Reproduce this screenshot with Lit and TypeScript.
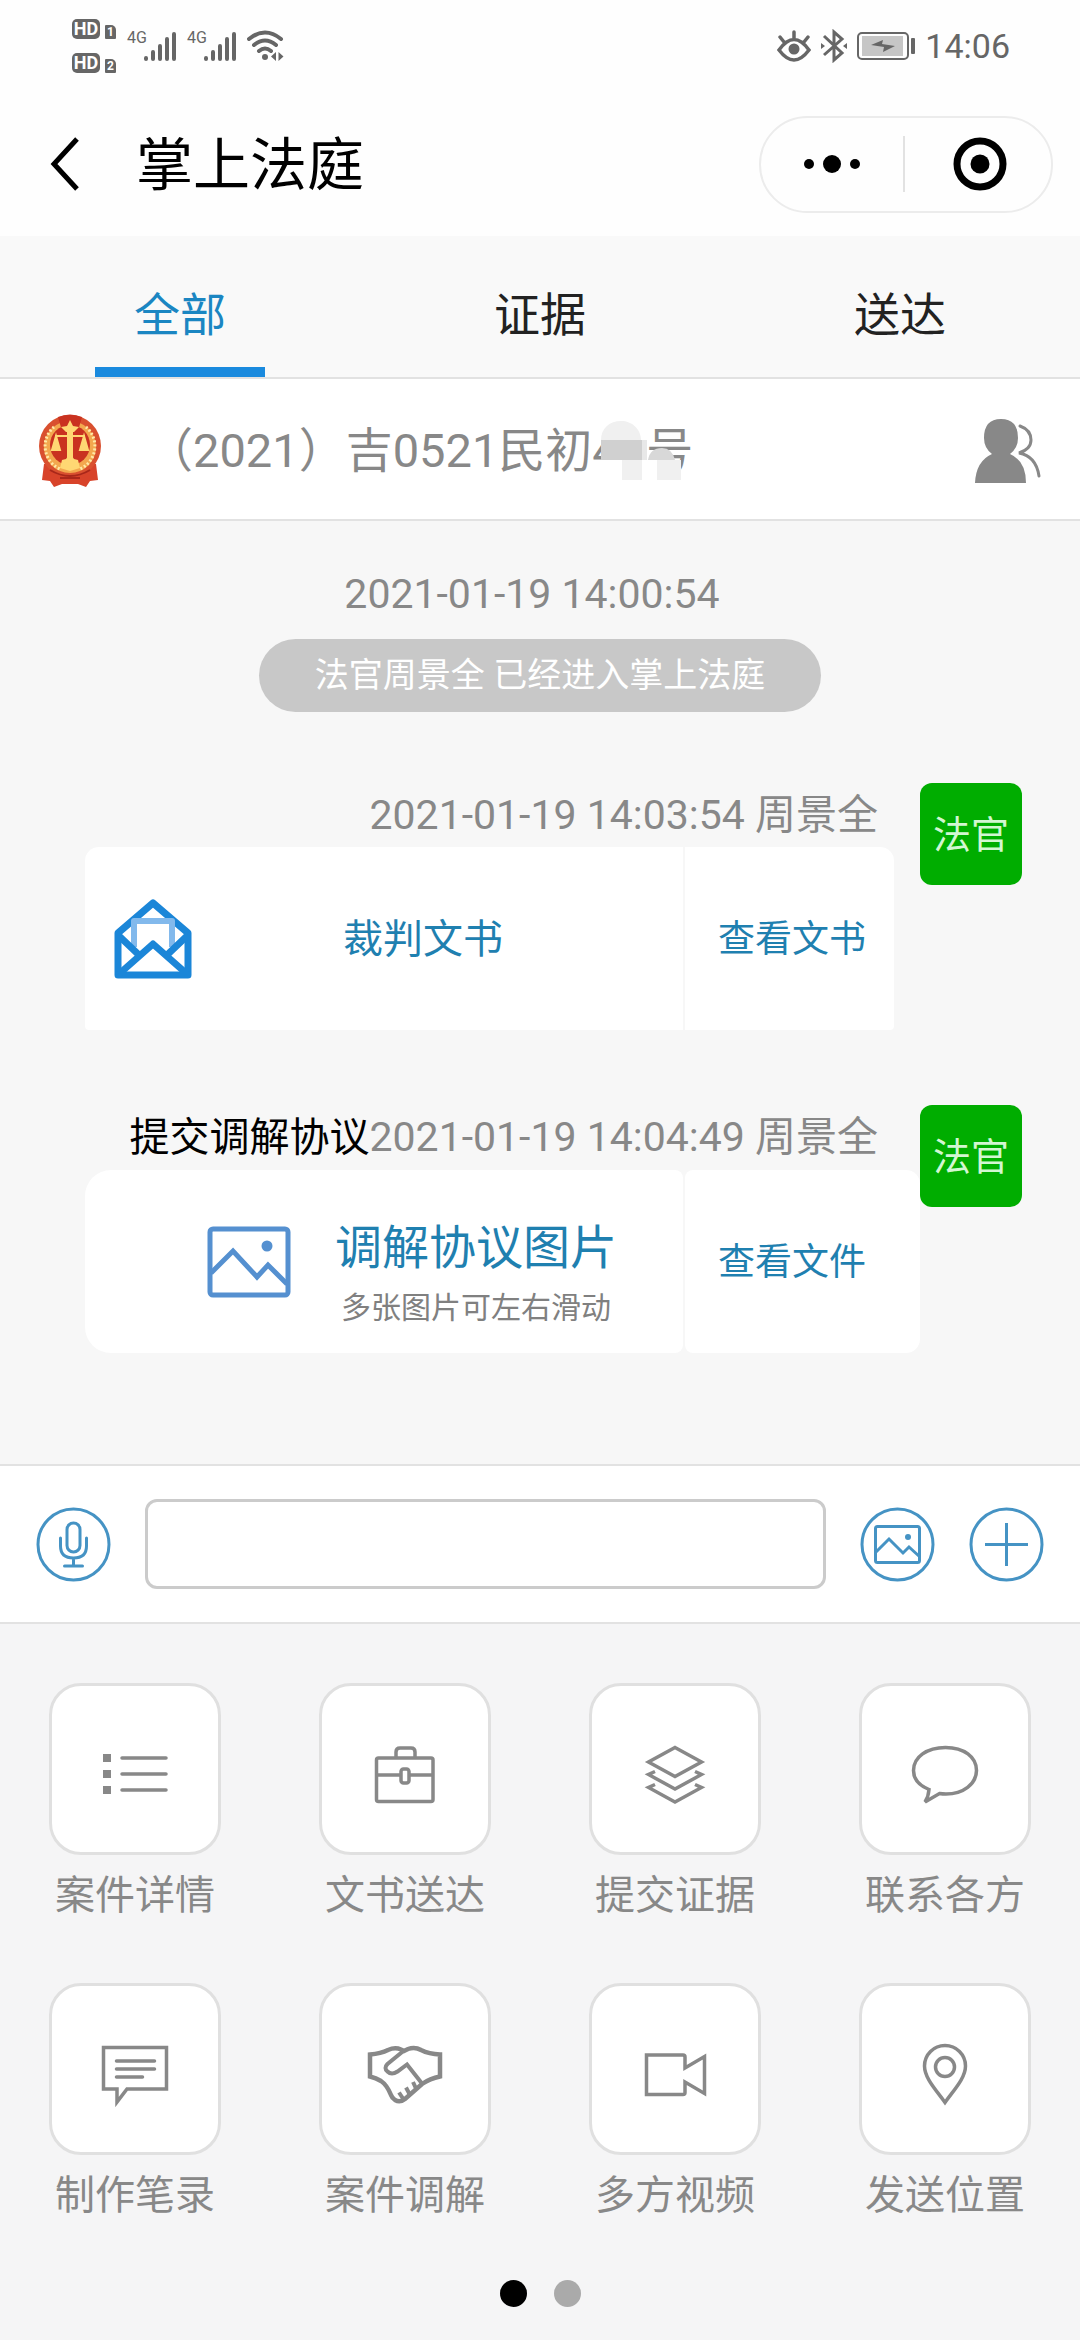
import { LitElement, html, css, svg } from "lit";
import { customElement, state } from "lit/decorators.js";
import { classMap } from "lit/directives/class-map.js";

interface Tool {
  label: string;
  icon: unknown;
}

const TABS = ["全部", "证据", "送达"];

const TOOLS: Tool[] = [
  {
    label: "案件详情",
    icon: svg`<path fill="currentColor" stroke="none" d="M8 25h8v8H8zM8 41h8v8H8zM8 57h8v8H8z"/><path stroke-linecap="round" d="M27 29h44M27 45h44M27 61h44"/>`,
  },
  {
    label: "文书送达",
    icon: svg`<rect x="11.500" y="29" width="56.500" height="43.500" rx="2"/><path d="M31 29V23q0-4 4-4h11q4 0 4 4v6M12 46h23M45 46h23"/><rect x="36" y="40" width="8" height="14" rx="2.500"/>`,
  },
  {
    label: "提交证据",
    icon: svg`<path d="M40 18.500 66.500 33 40 47.500 13.500 33zM20 42.500 13.500 45.500 40 60l26.500-14.500L60 42.500M20 55.500l-6.500 3L40 73l26.500-14.500-6.500-3"/>`,
  },
  {
    label: "联系各方",
    icon: svg`<path d="M24 60.500C13 56 8.500 49 8.500 41.500 8.500 28 22 18.500 40.500 18.500S71.500 28 71.500 41.500 58 65 41 65q-3.500 0-6.500-.5L20 73q3.500-5.500 4-12.500z"/>`,
  },
  {
    label: "制作笔录",
    icon: svg`<path d="M8.500 18.500h63V60H32L22 73V60H8.500z"/><path stroke-linecap="round" d="M21.500 32h38M21.500 40h38M21.500 48h26"/>`,
  },
  {
    label: "案件调解",
    icon: svg`<path stroke-width="4.500" d="M5 25.500q11-1 18-4.500 7-3 13-.5l3 1.500 4-2q7-2.500 13 1 8 4 19 4.500v22q-10 2-18 7.500L40 70q-5 4-10 1-3-2-4-5-4-10-10-14-5-3-11-4.500z"/><path stroke-width="4" d="M39 21.500 22.500 35q-4 4 0 7.500 4 4 10 0L42 35.500 57 54.500M48 53l3 6.500M41 58.500l3.500 6.500M34 63.500l4 6"/>`,
  },
  {
    label: "多方视频",
    icon: svg`<path d="M11.500 26H48q2 0 2 2v11l19.500-11.500v37L50 53v10.500q0 2-2 2H11.500z"/>`,
  },
  {
    label: "发送位置",
    icon: svg`<path d="M40 73.500C32 62 19.500 49.500 19.500 37a20.500 20.500 0 0 1 41 0C60.500 49.500 48 62 40 73.500z"/><circle cx="40" cy="38" r="9.500"/>`,
  },
];

@customElement("app-root")
export class AppRoot extends LitElement {
  @state() private tab = 0;
  @state() private panel = 0;

  static styles = css`
    :host {
      display: flex;
      flex-direction: column;
      min-height: 100vh;
      background: #f7f7f7;
      color: #888;
      font-family: Roboto, "Noto Sans CJK SC", sans-serif;
      font-size: 40px;
    }
    * {
      box-sizing: border-box;
    }
    button {
      padding: 0;
      border: 0;
      background: none;
      color: inherit;
      font: inherit;
      cursor: pointer;
    }
    svg {
      display: block;
      flex: none;
      fill: none;
      stroke: currentColor;
    }
    .top {
      background: #fefefe;
      color: #000;
    }
    .status {
      display: flex;
      align-items: center;
      height: 92px;
      padding: 0 70px 0 72px;
      color: #666;
    }
    .hd-list {
      display: grid;
      gap: 14px;
      margin-right: 11px;
    }
    .hd {
      display: flex;
      align-items: flex-end;
      gap: 5px;
    }
    .hd-tag,
    .sim {
      background: #666;
      color: #fff;
      font-weight: 700;
      text-align: center;
    }
    .hd-tag {
      width: 28px;
      border-radius: 5px;
      font-size: 18px;
      line-height: 20px;
    }
    .sim {
      width: 11px;
      border-radius: 1px 5px 1px 1px;
      font-size: 12px;
      line-height: 14px;
    }
    .net {
      display: flex;
      align-items: flex-start;
      margin-right: 10px;
    }
    .net-type {
      width: 17px;
      font-size: 16px;
      line-height: 14px;
    }
    .status-end {
      display: flex;
      align-items: center;
      gap: 10px;
      margin-left: auto;
    }
    .clock {
      font-size: 34px;
      line-height: 40px;
    }
    .nav {
      display: flex;
      align-items: center;
      height: 144px;
      padding: 0 27px 0 48px;
    }
    .back {
      margin-right: 52px;
    }
    .title {
      margin: 0;
      padding-top: 4px;
      font-size: 57px;
      font-weight: 400;
      line-height: 72px;
    }
    .capsule {
      display: flex;
      align-items: center;
      width: 294px;
      height: 97px;
      margin-left: auto;
      border: 2px solid #ececec;
      border-radius: 49px;
    }
    .capsule button {
      display: grid;
      flex: 1;
      place-items: center;
    }
    .capsule button + button {
      padding-left: 4px;
      border-left: 2px solid #e2e2e2;
    }
    .tabs {
      display: grid;
      grid-template-columns: repeat(3, 1fr);
      border-bottom: 2px solid #e2e2e2;
      background: #f9f9f9;
      color: #222;
    }
    .tab {
      display: grid;
      justify-items: center;
      padding-top: 49px;
      font-size: 46px;
      line-height: 60px;
    }
    .tab::after {
      content: "";
      width: 170px;
      height: 10px;
      margin-top: 22px;
    }
    .tab.active {
      color: #1b86c2;
    }
    .tab.active::after {
      background: #1a8ade;
    }
    .case {
      display: flex;
      align-items: center;
      height: 142px;
      padding: 3px 38px 0;
      border-bottom: 2px solid #e2e2e2;
      background: #fff;
    }
    .case-no {
      flex: 1;
      margin: 0 0 0 44px;
      font-size: 47px;
      font-weight: 400;
      line-height: 60px;
      white-space: nowrap;
    }
    .masked {
      position: relative;
      display: inline-block;
      width: 54px;
    }
    .mosaic {
      position: absolute;
      top: -3px;
      left: 4px;
    }
    .chat {
      flex: 1;
      padding: 43px 58px 36px 85px;
    }
    .entry {
      margin-left: -27px;
    }
    .time {
      padding-right: 16px;
      font-size: 41px;
      line-height: 60px;
      text-align: center;
    }
    .notice {
      width: fit-content;
      margin: 15px auto 71px;
      padding: 0 56px;
      border-radius: 37px;
      background: #c8c8c8;
      color: #fff;
      font-size: 34px;
      line-height: 73px;
    }
    .message {
      display: flex;
      align-items: flex-start;
      margin-bottom: 75px;
    }
    .body {
      flex: 1;
    }
    .meta {
      padding: 3px 42px 3px 0;
      font-size: 41px;
      line-height: 58px;
      text-align: right;
    }
    .meta strong {
      color: #000;
      font-size: 40px;
      font-weight: 400;
    }
    .avatar {
      width: 102px;
      padding-top: 3px;
      border-radius: 12px;
      background: #00ad00;
      color: #d2f7d2;
      font-size: 38px;
      line-height: 99px;
      text-align: center;
    }
    .card {
      display: flex;
      gap: 2px;
      height: 183px;
      color: #1f80b0;
    }
    .card.doc {
      margin-right: 26px;
    }
    .card-main {
      display: flex;
      flex: 1;
      align-items: center;
      border-radius: 14px 0 0 4px;
      background: #fff;
    }
    .doc .card-main {
      gap: 151px;
      padding-left: 29px;
    }
    .photo .card-main {
      gap: 44px;
      padding-left: 122px;
      border-radius: 26px 8px 8px 26px;
    }
    .doc-name {
      padding-bottom: 5px;
    }
    .card-action {
      width: 209px;
      padding: 0 0 6px 33px;
      border-radius: 0 14px 4px 0;
      background: #fff;
      font-size: 37px;
      text-align: left;
    }
    .photo .card-action {
      width: 235px;
      border-radius: 8px 14px 14px 8px;
    }
    .copy {
      padding-top: 32px;
      font-size: 47px;
      line-height: 60px;
    }
    .copy small {
      display: block;
      padding-left: 6px;
      color: #808080;
      font-size: 30px;
    }
    .photo-icon {
      color: #5590d0;
    }
    .composer {
      display: flex;
      align-items: center;
      height: 160px;
      padding: 0 36px;
      border: solid #e2e2e2;
      border-width: 2px 0;
      background: #fff;
      color: #4593c4;
    }
    .field {
      flex: 1;
      min-width: 0;
      height: 90px;
      margin: 0 34px;
      padding: 0 20px;
      border: 3px solid #cbcbcb;
      border-radius: 12px;
      outline: 0;
      background: #fff;
      color: #222;
      font: inherit;
    }
    .composer button + button {
      margin-left: 34px;
    }
    .panel {
      padding: 59px 0 34px;
      background: #f5f5f6;
    }
    .tools {
      display: grid;
      grid-template-columns: repeat(4, 1fr);
      row-gap: 57px;
    }
    .tool {
      display: grid;
      gap: 11px;
      justify-items: center;
      line-height: 60px;
    }
    .tile {
      display: grid;
      place-items: center;
      width: 172px;
      height: 172px;
      border: 3px solid #e0e0e0;
      border-radius: 32px;
      background: #fff;
    }
    .dots {
      display: flex;
      justify-content: center;
      gap: 27px;
      margin-top: 54px;
    }
    .dot {
      width: 27px;
      height: 27px;
      border-radius: 50%;
      background: #aaa;
    }
    .dot.active {
      background: #000;
    }
  `;

  private hd(n: number) {
    return html`<div class="hd"><span class="hd-tag">HD</span><span class="sim">${n}</span></div>`;
  }

  private network() {
    return html`<div class="net">
      <span class="net-type">4G</span>
      <svg width="33" height="31" stroke-width="4" stroke-linecap="round" aria-hidden="true">
        <path d="M2 27v1M9 21v7M16 15v13M23 8v20M30 3v25" />
      </svg>
    </div>`;
  }

  private statusBar() {
    return html`<div class="status">
      <div class="hd-list">${this.hd(1)}${this.hd(2)}</div>
      ${this.network()}${this.network()}
      <svg width="38" height="32" stroke-width="4" stroke-linecap="round" aria-hidden="true">
        <path d="M2 9q16-13 32 0M7 15q11-9 22 0M12 21q6-5 12 0" />
        <circle cx="18" cy="27" r="3" fill="currentColor" stroke="none" />
        <path fill="currentColor" stroke="none" d="M29 22v9l-5-4.500zM31.500 22v9l5-4.500z" />
      </svg>
      <div class="status-end">
        <svg width="34" height="32" stroke-width="3.500" stroke-linecap="round" aria-hidden="true">
          <path d="M2 20q15-21 30 0-15 20-30 0zM17 2v6M3 7l4 5M31 7l-4 5" />
          <circle cx="17" cy="19" r="5.500" fill="currentColor" stroke="none" />
        </svg>
        <svg width="26" height="34" stroke-width="3" aria-hidden="true">
          <path d="M3 7l18 17-8 7V3l8 7L3 26" />
          <path fill="currentColor" stroke="none" d="M0 14l4 3-4 3zM26 14l-4 3 4 3z" />
        </svg>
        <svg width="58" height="28" aria-hidden="true">
          <rect x="1" y="1" width="50" height="26" rx="4" stroke-width="2" />
          <rect x="5" y="4" width="41" height="20" fill="#c6c6c6" stroke="none" />
          <path fill="currentColor" stroke="none" d="M14 13l12-5-1 4 13 2-12 6 1-5z" />
          <rect x="54" y="6" width="4" height="16" rx="1" fill="currentColor" stroke="none" />
        </svg>
        <span class="clock">14:06</span>
      </div>
    </div>`;
  }

  private navBar() {
    return html`<header class="nav">
      <button class="back" aria-label="返回">
        <svg width="36" height="56" stroke-width="5"><path d="M29 3 6 28l23 25" /></svg>
      </button>
      <h1 class="title">掌上法庭</h1>
      <div class="capsule">
        <button aria-label="更多">
          <svg width="60" height="56">
            <g fill="currentColor" stroke="none">
              <circle cx="7" cy="28" r="5" /><circle cx="30" cy="28" r="9" /><circle cx="53" cy="28" r="5" />
            </g>
          </svg>
        </button>
        <button aria-label="关闭">
          <svg width="56" height="56" stroke-width="7">
            <circle cx="28" cy="28" r="23" />
            <circle cx="28" cy="28" r="9.500" fill="currentColor" stroke="none" />
          </svg>
        </button>
      </div>
    </header>`;
  }

  private emblem() {
    return html`<svg width="64" height="74" viewBox="0 0 64 74" aria-hidden="true">
      <g stroke="none">
        <path fill="#d8432a" d="M6 50 4 66l8 1 4 6 8-3h16l8 3 4-6 8-1-2-16z" />
        <circle cx="32" cy="32" r="31" fill="#d9502f" />
        <circle cx="32" cy="33" r="26" fill="#f3a84e" />
        <circle cx="32" cy="31" r="20" fill="#c93220" />
        <path fill="#c93220" d="M20 3q12-5 24 0l-4 14H24z" />
      </g>
      <g stroke="#ffd873" fill="#ffd873" stroke-width="2">
        <path d="M32 6l3 6 6 1-5 5h-8l-5-5 6-1z" stroke="none" />
        <path d="M17 22h30M18 22l-4 14h8zM46 22l-4 14h8z" />
        <path stroke="none" d="M29 16h6v28h-6zM22 54l2-8 4-1 4-6 4 6 4 1 2 8-10 3z" />
      </g>
      <path stroke="#ffe9a8" stroke-width="3" stroke-dasharray="2 2" d="M16 13a25 25 0 0 0 6 42M48 13a25 25 0 0 1-6 42" />
      <path stroke="#a9271a" stroke-width="2" d="M12 56q20 12 40 0M22 64h20" />
    </svg>`;
  }

  private caseBar() {
    return html`<section class="case">
      ${this.emblem()}
      <h2 class="case-no">（2021）吉0521民初<span class="masked"
          >4<svg class="mosaic" width="92" height="66" aria-hidden="true">
            <g stroke="none">
              <path fill="#fff" d="M5 0h44v66H5zM49 42h28v24H49z" />
              <path fill="#f0f0f0" d="M5 22C5 10 14 3 25 3s20 8 20 19zM26 42h20v20H26zM61 42h24v20H61z" />
              <path fill="#e8e8e8" d="M46 22h5v20h-5z" />
              <path fill="#d0d0d0" d="M5 22h41v20H5z" />
              <path fill="#d8d8d8" d="M52 42q2-12 14-12 10 0 13 12z" />
            </g></svg></span>号</h2>
      <button aria-label="参与人">
        <svg width="68" height="66" stroke-width="3" stroke-linecap="round">
          <path fill="currentColor" stroke="none" d="M1 65q1-22 17-29Q10 30 10 20 10 1 27 1t17 19q0 10-8 16 16 7 16 29z" />
          <path d="M46 8q11 4 11 14 0 9-12 13 17 3 20 23" />
        </svg>
      </button>
    </section>`;
  }

  private chat() {
    return html`<main class="chat">
      <div class="entry">
        <div class="time">2021-01-19 14:00:54</div>
        <div class="notice">法官周景全 已经进入掌上法庭</div>
      </div>
      <article class="message">
        <div class="body">
          <div class="meta">2021-01-19 14:03:54 周景全</div>
          <div class="card doc">
            <div class="card-main">
              <svg width="78" height="80" stroke-width="7" stroke-linejoin="round" aria-hidden="true">
                <g stroke="#1b86d8">
                  <path d="M39 4 4 34v42h70V34z" />
                  <path stroke="#82b9ec" stroke-width="6" d="M20 48V22h38v26" />
                  <path d="M4 36l21 20M74 36 53 56M5 75l34-30 34 30" />
                </g>
              </svg>
              <span class="doc-name">裁判文书</span>
            </div>
            <button class="card-action">查看文书</button>
          </div>
        </div>
        <div class="avatar">法官</div>
      </article>
      <article class="message">
        <div class="body">
          <div class="meta"><strong>提交调解协议</strong>2021-01-19 14:04:49 周景全</div>
          <div class="card photo">
            <div class="card-main">
              <svg class="photo-icon" width="84" height="72" stroke-width="5" aria-hidden="true">
                <rect x="3" y="3" width="78" height="66" rx="3" />
                <path d="M4 47l22-22 24 26 11-12 19 19" />
                <circle cx="60" cy="20" r="5.500" fill="currentColor" stroke="none" />
              </svg>
              <div class="copy">调解协议图片<small>多张图片可左右滑动</small></div>
            </div>
            <button class="card-action">查看文件</button>
          </div>
        </div>
        <div class="avatar">法官</div>
      </article>
    </main>`;
  }

  private composer() {
    return html`<form class="composer" @submit=${(e: Event) => e.preventDefault()}>
      <button type="button" aria-label="语音">
        <svg width="75" height="75" stroke-width="3">
          <circle cx="37.500" cy="37.500" r="35.500" />
          <rect x="31" y="16" width="13" height="29" rx="6.500" />
          <path stroke-linecap="round" d="M24.500 31v8q0 12 13 12t13-12v-8M37.500 51v8M28.500 59h18" />
        </svg>
      </button>
      <input class="field" type="text" aria-label="消息" />
      <button type="button" aria-label="图片">
        <svg width="75" height="75" stroke-width="3">
          <circle cx="37.500" cy="37.500" r="35.500" />
          <rect x="15.500" y="19.500" width="44" height="36" rx="2" />
          <path d="M16 45l13-13 14 14 6-6 11 10" />
          <circle cx="48" cy="30" r="3" fill="currentColor" stroke="none" />
        </svg>
      </button>
      <button type="button" aria-label="更多功能">
        <svg width="75" height="75" stroke-width="3">
          <circle cx="37.500" cy="37.500" r="35.500" />
          <path d="M37.500 16v43M16 37.500h43" />
        </svg>
      </button>
    </form>`;
  }

  render() {
    return html`
      <div class="top">${this.statusBar()}${this.navBar()}</div>
      <nav class="tabs" role="tablist">
        ${TABS.map(
          (t, i) => html`<button
            class=${classMap({ tab: true, active: i === this.tab })}
            role="tab"
            aria-selected=${i === this.tab ? "true" : "false"}
            @click=${() => (this.tab = i)}
          >${t}</button>`
        )}
      </nav>
      ${this.caseBar()}${this.chat()}${this.composer()}
      <section class="panel">
        <div class="tools">
          ${TOOLS.map(
            (t) => html`<button class="tool">
              <span class="tile"><svg width="80" height="80" stroke-width="3.500" aria-hidden="true">${t.icon}</svg></span>
              <span>${t.label}</span>
            </button>`
          )}
        </div>
        <div class="dots">
          ${[0, 1].map(
            (i) => html`<button
              class=${classMap({ dot: true, active: i === this.panel })}
              aria-label=${`第${i + 1}页`}
              @click=${() => (this.panel = i)}
            ></button>`
          )}
        </div>
      </section>
    `;
  }
}
